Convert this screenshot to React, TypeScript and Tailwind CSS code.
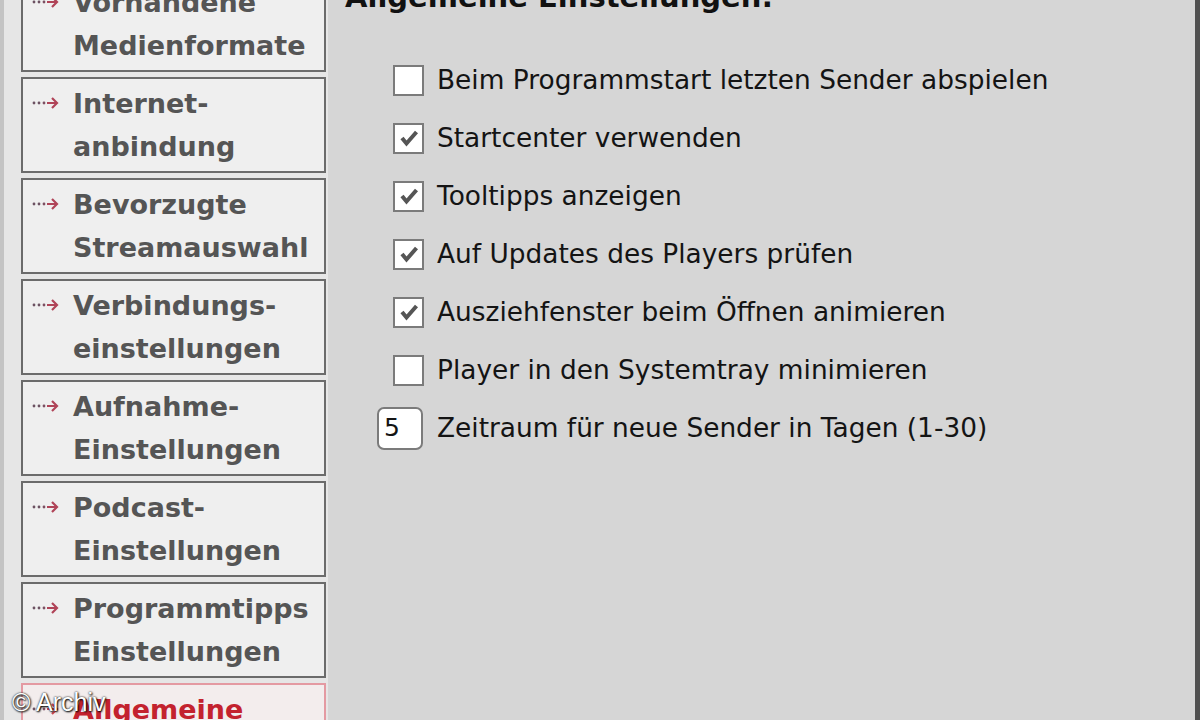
import React from 'react';

const NAV = [
  ['Vorhandene', 'Medienformate'],
  ['Internet-', 'anbindung'],
  ['Bevorzugte', 'Streamauswahl'],
  ['Verbindungs-', 'einstellungen'],
  ['Aufnahme-', 'Einstellungen'],
  ['Podcast-', 'Einstellungen'],
  ['Programmtipps', 'Einstellungen'],
  ['Allgemeine', 'Einstellungen'],
];

const OPTIONS: [string, boolean][] = [
  ['Beim Programmstart letzten Sender abspielen', false],
  ['Startcenter verwenden', true],
  ['Tooltipps anzeigen', true],
  ['Auf Updates des Players prüfen', true],
  ['Ausziehfenster beim Öffnen animieren', true],
  ['Player in den Systemtray minimieren', false],
];

function Arrow({ active }: { active: boolean }) {
  const c = active ? '#d04852' : '#b04458';
  return (
    <svg width="30" height="14" viewBox="0 0 30 14" className="shrink-0">
      <circle cx="2" cy="7" r="1.4" fill="#6c5262" />
      <circle cx="7" cy="7" r="1.4" fill="#6c5262" />
      <circle cx="12" cy="7" r="1.4" fill="#7c5062" />
      <path d="M15 7h10M20 2l5 5-5 5" stroke={c} strokeWidth="2.2" fill="none" />
    </svg>
  );
}

function NavButton({ lines, active }: { lines: string[]; active: boolean }) {
  return (
    <div
      className={`flex h-[96px] w-[305px] shrink-0 border-2 pt-[3px] ${
        active ? 'border-[#e49aa2] bg-[#f3eded]' : 'border-[#6b6b6b] bg-[#efefef]'
      }`}
    >
      <div className="w-[50px] pl-[9px] pt-[14px]">
        <Arrow active={active} />
      </div>
      <div
        className={`text-[27px] font-bold leading-[43px] ${active ? 'text-[#c3222e]' : 'text-[#555]'}`}
      >
        {lines.map((l) => (
          <div key={l} className="whitespace-nowrap">{l}</div>
        ))}
      </div>
    </div>
  );
}

function Checkbox({ checked }: { checked: boolean }) {
  return (
    <div className="flex h-[31px] w-[31px] shrink-0 items-center justify-center border-2 border-[#7b7b7b] bg-white">
      {checked && (
        <svg width="22" height="20" viewBox="0 0 22 20">
          <path d="M4 10l4.5 5.5L18.5 4" stroke="#555" strokeWidth="4" fill="none" />
        </svg>
      )}
    </div>
  );
}

export default function App() {
  return (
    <div
      className="relative flex h-[720px] w-[1200px] overflow-hidden bg-[#d6d6d6]"
      style={{ fontFamily: '"DejaVu Sans", Verdana, sans-serif' }}
    >
      {/* Sidebar */}
      <div className="flex w-[328px] shrink-0 border-l-[4px] border-[#c4c4c4] bg-[#e6e6e6]">
        <div className="mt-[-24px] flex flex-col gap-[5px] pl-[17px]">
          {NAV.map((lines, i) => (
            <NavButton key={lines[0]} lines={lines} active={i === NAV.length - 1} />
          ))}
        </div>
      </div>

      {/* Main panel */}
      <div className="flex flex-1 flex-col border-r-[5px] border-[#505050] bg-[#d6d6d6]">
        <div className="mt-[-17px] h-[29px] pl-[17px] text-[29px] font-bold leading-[29px] text-[#111]">
          Allgemeine Einstellungen:
        </div>
        <div className="mt-[39px] flex flex-col text-[26.4px] text-[#141414]">
          {OPTIONS.map(([label, checked]) => (
            <div key={label} className="flex h-[58px] items-center gap-[13px] pl-[65px]">
              <Checkbox checked={checked} />
              <span className="whitespace-nowrap">{label}</span>
            </div>
          ))}
          <div className="flex h-[58px] items-center gap-[14px] pl-[49px]">
            <div className="flex h-[43px] w-[46px] items-center rounded-[7px] border-2 border-[#7b7b7b] bg-white pl-[5px] text-[25px]">
              5
            </div>
            <span className="whitespace-nowrap">Zeitraum für neue Sender in Tagen (1-30)</span>
          </div>
        </div>
      </div>

      {/* Watermark */}
      <div
        className="absolute left-[12px] top-[684px] text-[25px] text-white"
        style={{ fontFamily: '"Liberation Sans", Arial, sans-serif', textShadow: '0 0 2px #000, 1px 1px 2px #000' }}
      >
        © Archiv
      </div>
    </div>
  );
}
